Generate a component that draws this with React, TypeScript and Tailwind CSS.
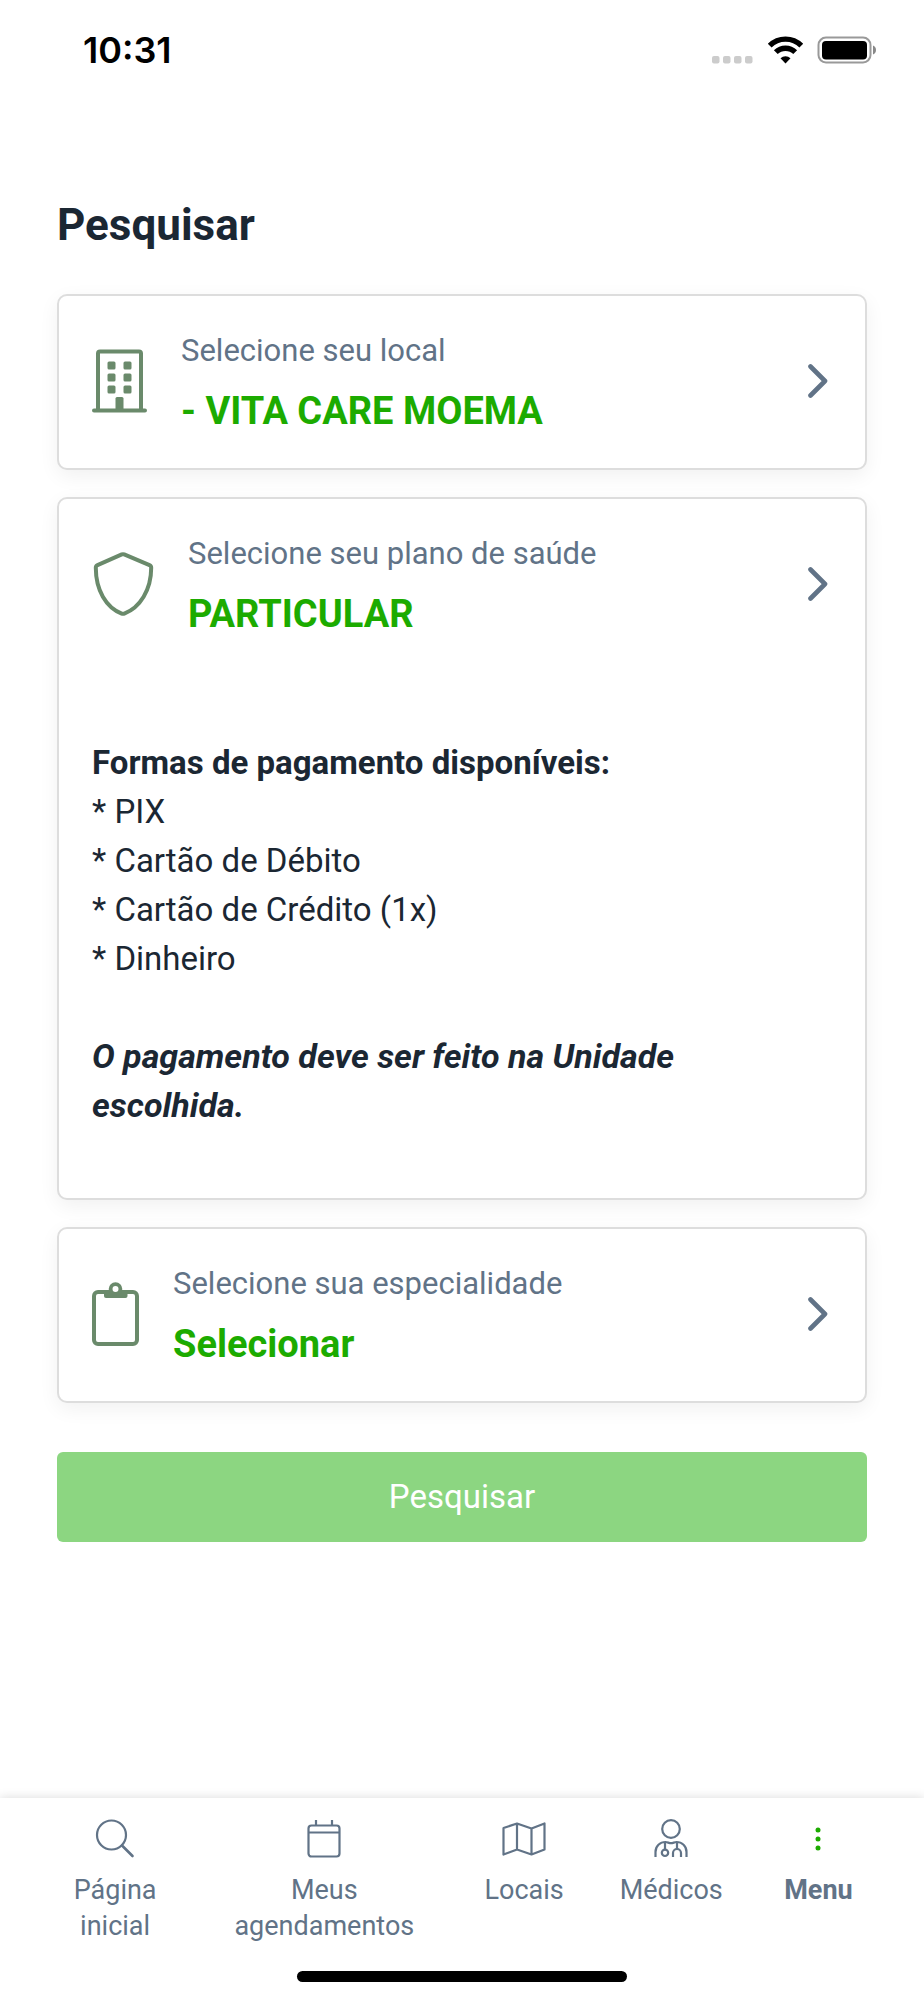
import type { ReactNode } from "react";
import clsx from "clsx";

function BuildingIcon() {
  return (
    <svg width="55" height="64" viewBox="0 0 55 64" fill="none" aria-hidden="true">
      <path d="M6 61V4.500a2 2 0 0 1 2-2h39a2 2 0 0 1 2 2V61" stroke="currentColor" strokeWidth="4" />
      <path d="M2 61.500h51" stroke="currentColor" strokeWidth="4" strokeLinecap="round" />
      <g fill="currentColor">
        <rect x="15.500" y="12.500" width="8" height="8" rx="1.500" />
        <rect x="31.500" y="12.500" width="8" height="8" rx="1.500" />
        <rect x="15.500" y="24.500" width="8" height="8" rx="1.500" />
        <rect x="31.500" y="24.500" width="8" height="8" rx="1.500" />
        <rect x="15.500" y="36.500" width="8" height="8" rx="1.500" />
        <rect x="31.500" y="36.500" width="8" height="8" rx="1.500" />
        <path d="M23.500 61V49.500a1.500 1.500 0 0 1 1.500-1.500h5a1.500 1.500 0 0 1 1.500 1.500V61z" />
      </g>
    </svg>
  );
}

function ShieldIcon() {
  return (
    <svg width="62" height="64" viewBox="0 0 62 64" fill="none" aria-hidden="true">
      <path
        d="M29.800 2.400a3 3 0 0 1 2.400 0L57.500 13.200a2.800 2.800 0 0 1 1.700 2.600C59.200 38 48 55.500 32.300 61.600a3.500 3.500 0 0 1-2.600 0C14 55.500 3.800 38 3.800 15.800a2.800 2.800 0 0 1 1.700-2.600z"
        stroke="currentColor"
        strokeWidth="4"
      />
    </svg>
  );
}

function ClipboardIcon() {
  return (
    <svg width="47" height="64" viewBox="0 0 47 64" fill="none" aria-hidden="true">
      <rect x="2" y="10" width="43" height="52" rx="4" stroke="currentColor" strokeWidth="4" />
      <path d="M12 9h23.500v5a2 2 0 0 1-2 2H14a2 2 0 0 1-2-2z" fill="currentColor" />
      <circle cx="23.500" cy="7" r="4.900" fill="#fff" stroke="currentColor" strokeWidth="3.800" />
    </svg>
  );
}

function ChevronIcon() {
  return (
    <svg width="24" height="36" viewBox="0 0 24 36" fill="none" className="shrink-0 text-[#617387]" aria-hidden="true">
      <path d="M2.500 3.500L17 18L2.500 32.500" stroke="currentColor" strokeWidth="4.600" strokeLinecap="round" strokeLinejoin="round" />
    </svg>
  );
}

function SearchIcon() {
  return (
    <svg width="40" height="40" viewBox="0 0 40 40" fill="none" stroke="currentColor" strokeWidth="2.200" strokeLinecap="round" aria-hidden="true">
      <circle cx="16.500" cy="16" r="14.500" />
      <path d="M27 26.500L37.500 37" strokeWidth="2.600" />
    </svg>
  );
}

function CalendarIcon() {
  return (
    <svg width="40" height="40" viewBox="0 0 40 40" fill="none" stroke="currentColor" strokeWidth="2.200" aria-hidden="true">
      <rect x="4.500" y="6.500" width="31" height="31" rx="3" />
      <path d="M4.500 13.500h31M12 1v5.500M28 1v5.500" />
    </svg>
  );
}

function MapIcon() {
  return (
    <svg width="44" height="40" viewBox="0 0 44 40" fill="none" stroke="currentColor" strokeWidth="2.200" strokeLinejoin="round" aria-hidden="true">
      <path d="M1.500 9L15 4.500L29.500 9.500L42.500 4.500V30.500L29.500 35.500L15 30.500L1.500 35.500zM15 4.500v26M29.500 9.500v26" />
    </svg>
  );
}

function DoctorIcon() {
  return (
    <svg width="40" height="40" viewBox="0 0 40 40" fill="none" stroke="currentColor" strokeWidth="2.200" aria-hidden="true">
      <circle cx="20" cy="10" r="8.800" />
      <path d="M4.500 38V33c0-6 4.500-10 10-10c2 0 3.500 1.200 5.500 1.200S23.500 23 25.500 23c5.500 0 10 4 10 10v5" />
      <path d="M14 23v7.500M26 23v7" />
      <circle cx="14" cy="33.800" r="3.200" />
      <path d="M22 38V34a4 4 0 0 1 8 0v4" />
    </svg>
  );
}

function DotsIcon() {
  return (
    <svg width="40" height="40" viewBox="0 0 40 40" fill="#1cab00" aria-hidden="true">
      <circle cx="20" cy="11" r="2.500" />
      <circle cx="20" cy="20" r="2.500" />
      <circle cx="20" cy="29" r="2.500" />
    </svg>
  );
}

function StatusBar() {
  return (
    <header className="flex items-center justify-between pt-7 pr-12 pl-[83px] text-black">
      <span className="font-[Inter,sans-serif] text-[36px] leading-[44px] font-semibold">10:31</span>
      <svg width="165" height="28" viewBox="0 0 165 28" aria-hidden="true">
        <g fill="#cccccc">
          <rect x="1" y="20" width="7.500" height="7.500" rx="2" />
          <rect x="12" y="20" width="7.500" height="7.500" rx="2" />
          <rect x="23" y="20" width="7.500" height="7.500" rx="2" />
          <rect x="34" y="20" width="7.500" height="7.500" rx="2" />
        </g>
        <g fill="none" stroke="#000" strokeWidth="5.400">
          <path d="M58.700 9.600a22.500 22.500 0 0 1 31.600 0" />
          <path d="M64.800 16.200a13.800 13.800 0 0 1 19.400 0" />
        </g>
        <path d="M69.500 22.300a7.200 7.200 0 0 1 10 0L74.500 27.500z" />
        <rect x="107.500" y="1.500" width="52" height="25" rx="7.500" fill="none" stroke="#999" strokeWidth="2" />
        <rect x="111" y="5" width="45" height="18.500" rx="4" />
        <path d="M162 9.500c4 1.500 4 7.500 0 9z" fill="#888" />
      </svg>
    </header>
  );
}

interface OptionCardProps {
  icon: ReactNode;
  label: string;
  value: string;
  children?: ReactNode;
}

function OptionCard({ icon, label, value, children }: OptionCardProps) {
  return (
    <section className="rounded-[10px] border-2 border-[#dddddd] bg-white shadow-[0_6px_20px_rgba(0,0,0,0.06)]">
      <button type="button" className="flex w-full items-center gap-[34px] px-[33px] pt-[35px] pb-[37px] text-left">
        <span className="shrink-0 text-[#6a8a6b]">{icon}</span>
        <span className="flex flex-1 flex-col gap-5">
          <span className="text-[31px] leading-[40px] text-[#617387]">{label}</span>
          <span className="text-[38px] leading-[40px] font-bold text-[#1cab00]">{value}</span>
        </span>
        <ChevronIcon />
      </button>
      {children}
    </section>
  );
}

const paymentMethods = ["PIX", "Cartão de Débito", "Cartão de Crédito (1x)", "Dinheiro"];

const navItems = [
  { label: "Página inicial", icon: <SearchIcon /> },
  { label: "Meus agendamentos", icon: <CalendarIcon /> },
  { label: "Locais", icon: <MapIcon /> },
  { label: "Médicos", icon: <DoctorIcon /> },
  { label: "Menu", icon: <DotsIcon />, active: true },
];

function BottomNav() {
  return (
    <nav className="mt-auto bg-white px-8 pt-[21px] pb-[18px] shadow-[0_0_10px_rgba(0,0,0,0.15)]">
      <div className="grid grid-cols-[166fr_252fr_147fr_147fr_147fr]">
        {navItems.map((item) => (
          <a
            key={item.label}
            href="#"
            aria-current={item.active ? "page" : undefined}
            className={clsx(
              "flex flex-col items-center gap-[13px] text-center text-[27px] leading-[36px] text-[#617387]",
              item.active && "font-bold",
            )}
          >
            {item.icon}
            <span className="w-min">{item.label}</span>
          </a>
        ))}
      </div>
      <div className="mx-auto mt-[27px] h-[11px] w-[330px] rounded-full bg-black" />
    </nav>
  );
}

export default function App() {
  return (
    <div className="flex min-h-screen flex-col bg-white font-[Roboto,sans-serif] text-[#1b2733]">
      <StatusBar />

      <main className="flex flex-col px-[57px] pt-[127px] pb-12">
        <h1 className="text-[44px] leading-[52px] font-bold">Pesquisar</h1>

        <div className="mt-[43px] flex flex-col gap-[27px]">
          <OptionCard icon={<BuildingIcon />} label="Selecione seu local" value="- VITA CARE MOEMA" />

          <OptionCard icon={<ShieldIcon />} label="Selecione seu plano de saúde" value="PARTICULAR">
            <div className="pt-[67px] pr-20 pb-[68px] pl-[33px] text-[33px] leading-[49px]">
              <p className="font-bold">Formas de pagamento disponíveis:</p>
              <ul>
                {paymentMethods.map((method) => (
                  <li key={method}>* {method}</li>
                ))}
              </ul>
              <p className="mt-[49px] text-[34px] leading-[49px] font-bold italic">
                O pagamento deve ser feito na Unidade escolhida.
              </p>
            </div>
          </OptionCard>

          <OptionCard icon={<ClipboardIcon />} label="Selecione sua especialidade" value="Selecionar" />
        </div>

        <button type="submit" className="mt-[49px] h-[90px] rounded-md bg-[#8cd681] text-[33px] text-white">
          Pesquisar
        </button>
      </main>

      <BottomNav />
    </div>
  );
}
